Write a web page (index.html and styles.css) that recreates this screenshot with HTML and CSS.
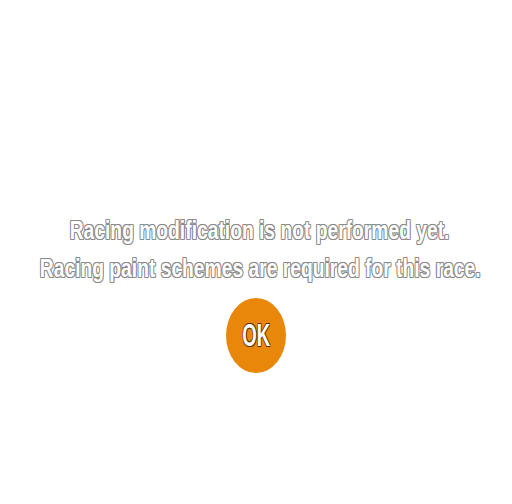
FILE: index.html
```html
<!DOCTYPE html>
<html>
<head>
<meta charset="utf-8">
<link rel="stylesheet" href="styles.css">
</head>
<body>
<div class="dialog">
  <div class="message">
    <p class="line"><span class="squeeze">Racing modification is not performed yet.</span></p>
    <p class="line"><span class="squeeze">Racing paint schemes are required for this race.</span></p>
  </div>
  <button class="ok"><span class="ok-label">OK</span></button>
</div>
</body>
</html>
```
FILE: styles.css
```css
html, body {
  margin: 0;
  padding: 0;
  background: #ffffff;
  width: 512px;
  height: 504px;
  overflow: hidden;
}
.dialog {
  display: flex;
  flex-direction: column;
  align-items: center;
  padding-top: 218px;
}
.message {
  display: flex;
  flex-direction: column;
  align-items: center;
  gap: 13px;
  width: 512px;
}
.line {
  margin: 0;
  width: 512px;
  display: flex;
  justify-content: center;
  font-family: "Liberation Sans", Arial, sans-serif;
  font-weight: bold;
  font-size: 25px;
  line-height: 25px;
  color: #ffffff;
  white-space: nowrap;
  overflow: visible;
}
.squeeze {
  display: inline-block;
  flex: none;
  transform: translateX(4px) scaleX(0.77);
  text-shadow:
    -1px -1px 0 #8a8a8a, 1px -1px 0 #8a8a8a, -1px 1px 0 #8a8a8a, 1px 1px 0 #8a8a8a,
    0 -1px 0 #8a8a8a, 0 1px 0 #8a8a8a, -1px 0 0 #8a8a8a, 1px 0 0 #8a8a8a;
}
.ok {
  margin-top: 17px;
  width: 60px;
  height: 75px;
  border-radius: 50%;
  border: none;
  padding: 0;
  background: #e8870a;
  display: flex;
  align-items: center;
  justify-content: center;
}
.ok-label {
  display: inline-block;
  font-family: "Liberation Sans", Arial, sans-serif;
  font-weight: bold;
  font-size: 31px;
  color: #ffffff;
  transform: scaleX(0.6);
  text-shadow:
    -1px -1px 0 #5a3000, 1px -1px 0 #5a3000, -1px 1px 0 #5a3000, 1px 1px 0 #5a3000;
}
```
